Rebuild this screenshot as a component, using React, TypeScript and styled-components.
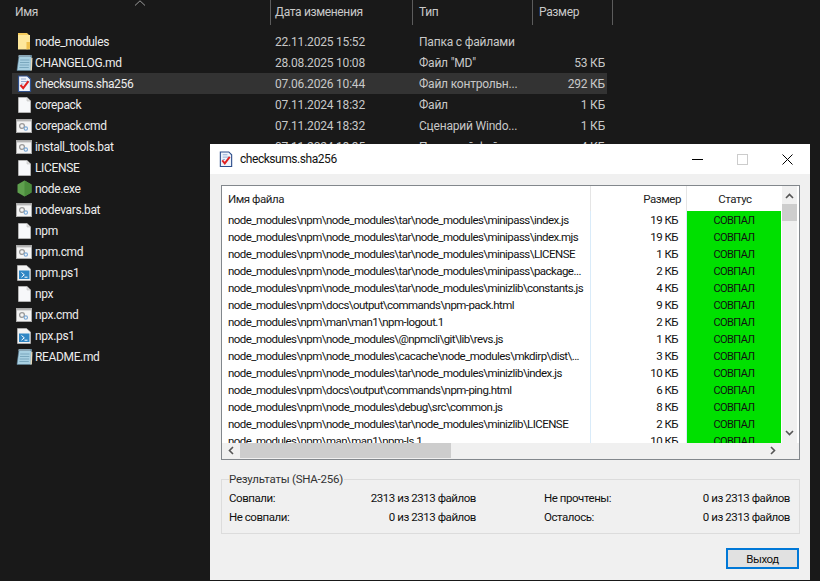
import React from "react";
import styled, { createGlobalStyle } from "styled-components";

const Global = createGlobalStyle`
  html, body { margin: 0; padding: 0; background: #191919; }
  body { width: 820px; height: 581px; overflow: hidden; font-family: Roboto, "Open Sans", "Liberation Sans", sans-serif; }
`;

const Desktop = styled.div`
  position: relative;
  width: 820px;
  height: 581px;
  background: #191919;
  overflow: hidden;
  color: #dedede;
  font-size: 12px;
`;

const Explorer = styled.div`
  display: flex;
  flex-direction: column;
  width: 612px;
`;

const HeaderRow = styled.div`
  position: relative;
  display: grid;
  grid-template-columns: 271px 142px 120px 80px;
  height: 25px;
  margin-bottom: 6px;
  letter-spacing: -0.35px;
`;

const HeaderCell = styled.div<{ $pad?: number }>`
  display: flex;
  align-items: center;
  padding-left: ${(p) => p.$pad ?? 4}px;
  padding-bottom: 2px;
  border-right: 1px solid #5c5c5c;
  color: #c9c9c9;
`;

const SortArrow = styled.svg`
  position: absolute;
  left: 134px;
  top: 0;
`;

const FileRow = styled.div<{ $selected?: boolean }>`
  display: grid;
  grid-template-columns: 263px 144px 114px 72px;
  align-items: center;
  height: 21px;
  margin-left: 12px;
  width: 595px;
  background: ${(p) => (p.$selected ? "#333333" : "transparent")};
`;

const NameCell = styled.div`
  display: flex;
  align-items: center;
  gap: 2px;
  padding-left: 3px;
  color: #ededed;
  letter-spacing: -0.35px;
`;

const IconBox = styled.span`
  display: inline-flex;
  width: 18px;
  height: 18px;
  align-items: center;
  justify-content: center;
  flex: none;
`;

const MetaCell = styled.div`
  color: #c8c8c8;
  white-space: nowrap;
  overflow: hidden;
  letter-spacing: -0.2px;
`;

const SizeCell = styled(MetaCell)`
  text-align: right;
`;

const Window = styled.div`
  position: absolute;
  left: 210px;
  top: 144px;
  width: 600px;
  height: 436px;
  background: #f0f0f0;
  color: #111;
  display: flex;
  flex-direction: column;
  letter-spacing: -0.45px;
`;

const TitleBar = styled.div`
  display: flex;
  align-items: center;
  height: 30px;
  background: #fff;
  padding-left: 8px;
  font-size: 12px;
`;

const TitleText = styled.div`
  flex: 1;
  margin-left: 6px;
`;

const WinButton = styled.div`
  width: 45px;
  height: 30px;
  display: flex;
  align-items: center;
  justify-content: center;
`;

const Body = styled.div`
  flex: 1;
  display: flex;
  flex-direction: column;
  padding: 11px 10px 12px 11px;
`;

const ListBox = styled.div`
  display: grid;
  grid-template-columns: 560px 17px;
  grid-template-rows: 257px 16px;
  width: 579px;
  height: 275px;
  box-sizing: border-box;
  border: 1px solid #82878c;
  background: #fff;
`;

const ListPane = styled.div`
  display: flex;
  flex-direction: column;
  overflow: hidden;
`;

const ListHeader = styled.div`
  display: grid;
  grid-template-columns: 369px 96px 95px;
  height: 25px;
  flex: none;
`;

const ColHead = styled.div<{ $align?: string }>`
  display: flex;
  align-items: center;
  justify-content: ${(p) => p.$align ?? "flex-start"};
  padding: 0 5px 0 6px;
  border-right: 1px solid #e5e5e5;
  font-size: 11.5px;
  color: #222;
  &:last-child { border-right: none; }
`;

const ListRow = styled.div`
  display: grid;
  grid-template-columns: 369px 96px 95px;
  height: 17px;
  flex: none;
  font-size: 11.5px;
  line-height: 19px;
  letter-spacing: -0.55px;
`;

const FileName = styled.div`
  padding-left: 6px;
  border-right: 1px solid #d9ebf9;
  white-space: nowrap;
  overflow: hidden;
`;

const FileSize = styled.div`
  padding-right: 8px;
  text-align: right;
  border-right: 1px solid #d9ebf9;
`;

const Status = styled.div`
  background: #00e000;
  text-align: center;
  margin-right: 1px;
  font-size: 11px;
`;

const VScroll = styled.div`
  position: relative;
  background: #f0f0f0;
  border-right: 2px solid #fff;
`;

const VThumb = styled.div`
  position: absolute;
  left: 0;
  width: 15px;
  top: 18px;
  height: 17px;
  background: #cdcdcd;
`;

const ScrollArrow = styled.svg<{ $bottom?: boolean }>`
  position: absolute;
  left: 3px;
  ${(p) => (p.$bottom ? "bottom: 7px;" : "top: 7px;")}
`;

const HScroll = styled.div`
  position: relative;
  grid-column: 1 / 2;
  background: #f0f0f0;
`;

const HThumb = styled.div`
  position: absolute;
  left: 18px;
  top: 0;
  height: 15px;
  width: 211px;
  background: #cdcdcd;
`;

const HArrow = styled.svg<{ $right?: boolean }>`
  position: absolute;
  top: 3px;
  ${(p) => (p.$right ? "right: 6px;" : "left: 6px;")}
`;

const Corner = styled.div`
  background: #f0f0f0;
`;

const Group = styled.fieldset`
  margin: 12px 0 0;
  width: 579px;
  height: 62px;
  box-sizing: border-box;
  border: 1px solid #dcdcdc;
  border-radius: 0;
  padding: 3px 8px 0 7px;
  display: grid;
  grid-template-columns: 247px 68px 246px;
  grid-template-rows: 19px 19px;
  align-content: start;
  font-size: 11.5px;
  line-height: 19px;
`;

const Legend = styled.legend`
  padding: 0 1px 0 0;
  font-size: 11.5px;
  line-height: 14px;
  color: #333;
  letter-spacing: -0.25px;
`;

const ResultCell = styled.div`
  display: flex;
  justify-content: space-between;
  white-space: nowrap;
`;

const Spacer = styled.div``;

const Footer = styled.div`
  display: flex;
  justify-content: flex-end;
  margin-top: 14px;
  padding-right: 1px;
`;

const ExitButton = styled.button`
  width: 73px;
  height: 21px;
  box-sizing: border-box;
  border: 2px solid #0078d7;
  background: #e1e1e1;
  padding: 0;
  font-family: inherit;
  font-size: 11.5px;
  letter-spacing: inherit;
  color: #111;
`;

const FolderIcon = () => (
  <svg width="14" height="17" viewBox="0 0 14 17">
    <path d="M1 0h9l2 2v14H1z" fill="#f5cb5c" />
    <path d="M1 2h12v14.5H1z" fill="#fde79b" />
    <path d="M9.5 9H13v6.5L9.5 16.5z" fill="#efc04c" />
  </svg>
);
const NotepadIcon = () => (
  <svg width="17" height="17" viewBox="0 0 17 17">
    <path d="M3 1.5h12.5l-.5 15H1z" fill="#a8d0e2" stroke="#5b7e94" strokeWidth=".6" />
    <path d="M3 1h12.5v2H3z" fill="#6c8ea2" />
    <path d="M3 1v2M5 1v2M7 1v2M9 1v2M11 1v2M13 1v2" stroke="#dfe8ec" strokeWidth=".5" />
    <path d="M4.2 6h9.3M4 8.5h9.3M3.7 11h9.4M3.4 13.5h9.4" stroke="#6f9db5" strokeWidth=".8" />
    <path d="M15.2 3.5l1.3.5-.6 12.5h-1.4z" fill="#e7d9ba" />
  </svg>
);
const CheckIcon = ({ size = 17 }: { size?: number }) => (
  <svg width={size} height={size} viewBox="0 0 17 17">
    <path d="M2.5 1h9l3 3v12.5h-12z" fill="#eef3fb" stroke="#2e4f8c" strokeWidth="1.2" />
    <path d="M5 4h5M5 6.5h7M5 9h2.5" stroke="#86a0cc" strokeWidth=".9" />
    <path d="M4.5 10l2.7 3.2 5.3-7" fill="none" stroke="#e02020" strokeWidth="2" />
  </svg>
);
const FileIcon = () => (
  <svg width="13" height="16" viewBox="0 0 13 16">
    <path d="M.5.5H9L12.5 4v11.5H.5z" fill="#f7f8fa" stroke="#c4c4c4" strokeWidth=".7" />
    <path d="M9 .5V4h3.5" fill="#dddddd" stroke="#c4c4c4" strokeWidth=".6" />
  </svg>
);
const BatIcon = () => (
  <svg width="16" height="14" viewBox="0 0 16 14">
    <rect x=".5" y=".5" width="15" height="13" fill="#f4f4f4" stroke="#aaaaaa" />
    <rect x="1" y="1" width="14" height="1.4" fill="#b5b5b5" />
    <circle cx="6" cy="7" r="2.4" fill="none" stroke="#9a9a9a" strokeWidth="1.3" />
    <circle cx="9.8" cy="9.6" r="1.7" fill="none" stroke="#7aa8d6" strokeWidth="1.1" />
  </svg>
);
const NodeIcon = () => (
  <svg width="15" height="17" viewBox="0 0 15 17">
    <path d="M7.5.5l7 4v8l-7 4-7-4v-8z" fill="#5fa04e" />
    <path d="M7.5.5l7 4v8l-7 4z" fill="#4b8c3c" />
  </svg>
);
const PsIcon = () => (
  <svg width="14" height="16" viewBox="0 0 14 16">
    <path d="M.5.5h9L13.5 4v11.5H.5z" fill="#f3f3f3" stroke="#bbb" strokeWidth=".7" />
    <rect x="2" y="5.5" width="10.5" height="8.5" fill="#2f86c4" />
    <path d="M4.5 7.5l2.8 2.3-2.8 2.4M7.5 12.2h3" fill="none" stroke="#fff" strokeWidth="1" />
  </svg>
);

type Kind = "folder" | "note" | "check" | "file" | "bat" | "node" | "ps";
const icons: Record<Kind, React.ReactNode> = {
  folder: <FolderIcon />,
  note: <NotepadIcon />,
  check: <CheckIcon />,
  file: <FileIcon />,
  bat: <BatIcon />,
  node: <NodeIcon />,
  ps: <PsIcon />,
};

const files: { n: string; k: Kind; d: string; t: string; s: string; sel?: boolean }[] = [
  { n: "node_modules", k: "folder", d: "22.11.2025 15:52", t: "Папка с файлами", s: "" },
  { n: "CHANGELOG.md", k: "note", d: "28.08.2025 10:08", t: 'Файл "MD"', s: "53 КБ" },
  { n: "checksums.sha256", k: "check", d: "07.06.2026 10:44", t: "Файл контрольн...", s: "292 КБ", sel: true },
  { n: "corepack", k: "file", d: "07.11.2024 18:32", t: "Файл", s: "1 КБ" },
  { n: "corepack.cmd", k: "bat", d: "07.11.2024 18:32", t: "Сценарий Windo...", s: "1 КБ" },
  { n: "install_tools.bat", k: "bat", d: "07.11.2024 18:35", t: "Пакетный файл", s: "4 КБ" },
  { n: "LICENSE", k: "file", d: "", t: "", s: "" },
  { n: "node.exe", k: "node", d: "", t: "", s: "" },
  { n: "nodevars.bat", k: "bat", d: "", t: "", s: "" },
  { n: "npm", k: "file", d: "", t: "", s: "" },
  { n: "npm.cmd", k: "bat", d: "", t: "", s: "" },
  { n: "npm.ps1", k: "ps", d: "", t: "", s: "" },
  { n: "npx", k: "file", d: "", t: "", s: "" },
  { n: "npx.cmd", k: "bat", d: "", t: "", s: "" },
  { n: "npx.ps1", k: "ps", d: "", t: "", s: "" },
  { n: "README.md", k: "note", d: "", t: "", s: "" },
];

const P = "node_modules\\npm\\";
const T = P + "node_modules\\tar\\node_modules\\";
const rows: [string, string][] = [
  [T + "minipass\\index.js", "19 КБ"],
  [T + "minipass\\index.mjs", "19 КБ"],
  [T + "minipass\\LICENSE", "1 КБ"],
  [T + "minipass\\package...", "2 КБ"],
  [T + "minizlib\\constants.js", "4 КБ"],
  [P + "docs\\output\\commands\\npm-pack.html", "9 КБ"],
  [P + "man\\man1\\npm-logout.1", "2 КБ"],
  [P + "node_modules\\@npmcli\\git\\lib\\revs.js", "1 КБ"],
  [P + "node_modules\\cacache\\node_modules\\mkdirp\\dist\\...", "3 КБ"],
  [T + "minizlib\\index.js", "10 КБ"],
  [P + "docs\\output\\commands\\npm-ping.html", "6 КБ"],
  [P + "node_modules\\debug\\src\\common.js", "8 КБ"],
  [T + "minizlib\\LICENSE", "2 КБ"],
  [P + "man\\man1\\npm-ls.1", "10 КБ"],
];

export default function App() {
  return (
    <Desktop>
      <Global />
      <Explorer>
        <HeaderRow>
          <HeaderCell $pad={15}>Имя</HeaderCell>
          <HeaderCell>Дата изменения</HeaderCell>
          <HeaderCell $pad={6}>Тип</HeaderCell>
          <HeaderCell $pad={6}>Размер</HeaderCell>
          <SortArrow width="12" height="6" viewBox="0 0 12 6">
            <path d="M1 5.5L6 .8l5 4.7" fill="none" stroke="#9a9a9a" />
          </SortArrow>
        </HeaderRow>
        {files.map((f) => (
          <FileRow key={f.n} $selected={f.sel}>
            <NameCell>
              <IconBox>{icons[f.k]}</IconBox>
              {f.n}
            </NameCell>
            <MetaCell>{f.d}</MetaCell>
            <MetaCell>{f.t}</MetaCell>
            <SizeCell>{f.s}</SizeCell>
          </FileRow>
        ))}
      </Explorer>
      <Window>
        <TitleBar>
          <CheckIcon size={16} />
          <TitleText>checksums.sha256</TitleText>
          <WinButton>
            <svg width="11" height="11" viewBox="0 0 11 11"><path d="M0 5.5h11" stroke="#000" /></svg>
          </WinButton>
          <WinButton>
            <svg width="11" height="11" viewBox="0 0 11 11"><rect x=".5" y=".5" width="10" height="10" fill="none" stroke="#ccc" /></svg>
          </WinButton>
          <WinButton>
            <svg width="11" height="11" viewBox="0 0 11 11"><path d="M.5.5l10 10M10.5.5l-10 10" stroke="#000" /></svg>
          </WinButton>
        </TitleBar>
        <Body>
          <ListBox>
            <ListPane>
              <ListHeader>
                <ColHead>Имя файла</ColHead>
                <ColHead $align="flex-end">Размер</ColHead>
                <ColHead $align="center">Статус</ColHead>
              </ListHeader>
              {rows.map(([n, s], i) => (
                <ListRow key={i}>
                  <FileName>{n}</FileName>
                  <FileSize>{s}</FileSize>
                  <Status>СОВПАЛ</Status>
                </ListRow>
              ))}
            </ListPane>
            <VScroll>
              <ScrollArrow width="9" height="6" viewBox="0 0 9 6">
                <path d="M1 5l3.5-3.5L8 5" fill="none" stroke="#555" strokeWidth="1.6" />
              </ScrollArrow>
              <VThumb />
              <ScrollArrow $bottom width="9" height="6" viewBox="0 0 9 6">
                <path d="M1 1l3.5 3.5L8 1" fill="none" stroke="#555" strokeWidth="1.6" />
              </ScrollArrow>
            </VScroll>
            <HScroll>
              <HArrow width="6" height="9" viewBox="0 0 6 9">
                <path d="M5 1L1.5 4.5 5 8" fill="none" stroke="#555" strokeWidth="1.6" />
              </HArrow>
              <HThumb />
              <HArrow $right width="6" height="9" viewBox="0 0 6 9">
                <path d="M1 1l3.5 3.5L1 8" fill="none" stroke="#555" strokeWidth="1.6" />
              </HArrow>
            </HScroll>
            <Corner />
          </ListBox>
          <Group>
            <Legend>Результаты (SHA-256)</Legend>
            <ResultCell><span>Совпали:</span><span>2313 из 2313 файлов</span></ResultCell>
            <Spacer />
            <ResultCell><span>Не прочтены:</span><span>0 из 2313 файлов</span></ResultCell>
            <ResultCell><span>Не совпали:</span><span>0 из 2313 файлов</span></ResultCell>
            <Spacer />
            <ResultCell><span>Осталось:</span><span>0 из 2313 файлов</span></ResultCell>
          </Group>
          <Footer>
            <ExitButton>Выход</ExitButton>
          </Footer>
        </Body>
      </Window>
    </Desktop>
  );
}
